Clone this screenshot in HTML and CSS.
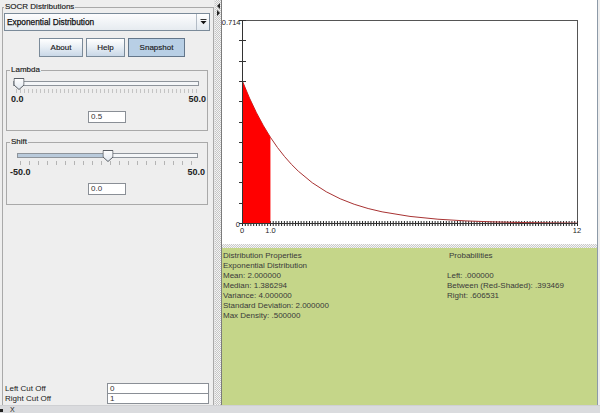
FILE: index.html
```html
<!DOCTYPE html>
<html>
<head>
<meta charset="utf-8">
<title>SOCR Distributions</title>
<link rel="stylesheet" href="styles.css">
</head>
<body>
<div class="app">
  <div class="main">
    <div class="left">
      <div class="group outer">
        <span class="title">SOCR Distributions</span>
        <div class="combo">
          <span class="combo-text">Exponential Distribution</span>
          <span class="combo-btn"><svg width="7" height="6" viewBox="0 0 7 6"><path d="M0.5 0.5H6.5" stroke="#333" stroke-width="1"/><path d="M0.5 2H6.5L3.5 5.2Z" fill="#111"/></svg></span>
        </div>
        <div class="buttons">
          <button class="btn about">About</button>
          <button class="btn help">Help</button>
          <button class="btn snap pressed">Snapshot</button>
        </div>
        <div class="group param lambda">
          <span class="title">Lambda</span>
          <div class="slider">
            <div class="track" style="--pos:0.01">
              <div class="fill"></div>
              <svg class="thumb" width="11" height="12" viewBox="0 0 11 12"><defs><linearGradient id="tg1" x1="0" y1="0" x2="0" y2="1"><stop offset="0" stop-color="#ffffff"/><stop offset="1" stop-color="#dfe6ee"/></linearGradient></defs><path d="M0.5 0.5H10.5V7L5.5 11.5L0.5 7Z" fill="url(#tg1)" stroke="#5a5f66"/></svg>
            </div>
          </div>
          <div class="ticks fine"></div>
          <div class="range"><span>0.0</span><span>50.0</span></div>
          <div class="field-row"><div class="field small">0.5</div></div>
        </div>
        <div class="group param shift">
          <span class="title">Shift</span>
          <div class="slider">
            <div class="track" style="--pos:0.5">
              <div class="fill"></div>
              <svg class="thumb" width="11" height="12" viewBox="0 0 11 12"><defs><linearGradient id="tg2" x1="0" y1="0" x2="0" y2="1"><stop offset="0" stop-color="#ffffff"/><stop offset="1" stop-color="#dfe6ee"/></linearGradient></defs><path d="M0.5 0.5H10.5V7L5.5 11.5L0.5 7Z" fill="url(#tg2)" stroke="#5a5f66"/></svg>
            </div>
          </div>
          <div class="ticks coarse"></div>
          <div class="range"><span>-50.0</span><span>50.0</span></div>
          <div class="field-row"><div class="field small">0.0</div></div>
        </div>
        <div class="spacer"></div>
        <div class="cut-row">
          <span class="cut-label">Left Cut Off</span>
          <div class="field wide">0</div>
        </div>
        <div class="cut-row second">
          <span class="cut-label">Right Cut Off</span>
          <div class="field wide">1</div>
        </div>
      </div>
    </div>
    <div class="divider">
      <svg width="7" height="16" viewBox="0 0 7 16"><path d="M5 2L2 5L5 8Z" fill="#222"/><path d="M2 9L5 12L2 15Z" fill="#222"/></svg>
    </div>
    <div class="right">
      <div class="chart">
        <svg class="plot" width="375" height="244" viewBox="0 1 375 244">
          <path d="M20.5 21.5H355.5V224.5" fill="none" stroke="#555" stroke-width="1" shape-rendering="crispEdges"/>
          <path d="M17 21.5H24M17 41.8H24M17 62.1H24M17 82.4H24M17 102.7H24M17 123H24M17 143.3H24M17 163.6H24M17 183.9H24M17 204.2H24M17 224.5H24" stroke="#333" stroke-width="1" shape-rendering="crispEdges"/>
          <line x1="20" y1="224.5" x2="356" y2="224.5" stroke="#222" stroke-width="5" stroke-dasharray="1 1.7917"/>
          <polyline fill="none" stroke="#a83232" stroke-width="1" points="20.5,82.35 27.48,99.06 34.46,113.79 41.44,126.8 48.42,138.28 55.4,148.41 62.38,157.35 69.35,165.24 76.33,172.21 90.29,183.77 104.25,192.78 118.21,199.79 132.17,205.26 146.13,209.52 160.09,212.83 188,217.42 215.92,220.21 243.84,221.9 271.75,222.92 299.67,223.54 327.59,223.92 355.5,224.15"/>
          <polygon fill="#ff0000" points="20.5,224.5 20.5,82.35 27.48,99.06 34.46,113.79 41.44,126.8 48.42,138.28 48.42,224.5"/>
          <path d="M20.5 21.5V224.5H355.5" fill="none" stroke="#333" stroke-width="1" shape-rendering="crispEdges"/>
          <g class="axis-label">
            <text x="18.5" y="26" text-anchor="end">0.714</text>
            <text x="18" y="228" text-anchor="end">0</text>
            <text x="20" y="233.5" text-anchor="middle">0</text>
            <text x="48.5" y="233.5" text-anchor="middle">1.0</text>
            <text x="355" y="233.5" text-anchor="middle">12</text>
          </g>
        </svg>
      </div>
      <div class="sep"></div>
      <div class="props">
        <div class="col">
          <div>Distribution Properties</div>
          <div>Exponential Distribution</div>
          <div>Mean: 2.000000</div>
          <div>Median: 1.386294</div>
          <div>Variance: 4.000000</div>
          <div>Standard Deviation: 2.000000</div>
          <div>Max Density: .500000</div>
        </div>
        <div class="col">
          <div class="prob-title">Probabilities</div>
          <div class="blank"></div>
          <div>Left: .000000</div>
          <div>Between (Red-Shaded): .393469</div>
          <div>Right: .606531</div>
        </div>
      </div>
    </div>
    <div class="edge"></div>
  </div>
  <div class="status"><span class="sq"></span><span class="status-x">X</span></div>
</div>
</body>
</html>
```
FILE: styles.css
```css
* { box-sizing: border-box; }
html, body { margin: 0; padding: 0; }
body {
  width: 600px;
  height: 413px;
  overflow: hidden;
  background: #eeeeee;
  font-family: "Liberation Sans", Arial, sans-serif;
  font-size: 8px;
  color: #1c1c1c;
}
.app { display: flex; flex-direction: column; width: 600px; height: 413px; }
.main { display: flex; height: 405px; }

/* left control column */
.left { width: 214px; background: #eeeeee; display: flex; flex-direction: column; }
.group { border: 1px solid #a9a9a9; display: flex; flex-direction: column; }
.title {
  align-self: flex-start;
  margin: -6px 0 0 0;
  padding: 0 1px;
  height: 10px;
  line-height: 10px;
  font-size: 8px;
  background: #eeeeee;
  color: #1a1a1a;
  -webkit-text-stroke: 0.15px #1a1a1a;
}
.outer {
  flex: 1;
  margin: 7px 0 0 2px;
  padding: 0 3px 1px 1px;
  border-bottom: 0;
}
.combo {
  margin-top: 1px;
  height: 18px;
  border: 1px solid #7a8a99;
  display: flex;
  background: linear-gradient(#fdfdfe, #e6ebf0);
}
.combo-text { flex: 1; padding-left: 2px; line-height: 16px; font-size: 8.3px; color: #111; -webkit-text-stroke: 0.25px #111; }
.combo-btn {
  width: 13px;
  border-left: 1px solid #b3bcc6;
  display: flex;
  align-items: center;
  justify-content: center;
  background: linear-gradient(#ffffff, #e1e8ef);
}
.buttons { display: flex; gap: 3px; margin-top: 7px; padding-left: 35px; }
.btn {
  height: 19px;
  padding: 0;
  border: 1px solid #7a8a99;
  border-radius: 0;
  background: linear-gradient(#ffffff 0%, #e9eff5 45%, #c9d8e7 100%);
  font: 8px "Liberation Sans", Arial, sans-serif;
  color: #1a1a1a;
  -webkit-text-stroke: 0.15px #1a1a1a;
}
.about { width: 44px; }
.help { width: 39px; }
.snap { width: 57px; }
.btn.pressed { background: #b8cfe5; border-color: #63768a; }

.param { margin: 13px 2px 0; }
.param > .title { margin-left: 3px; }
.lambda { padding-bottom: 7px; }
.shift { margin-top: 11px; padding-bottom: 9px; }
.slider { margin-top: 2px; height: 12px; display: flex; align-items: center; }
.track {
  position: relative;
  flex: 1;
  height: 5px;
  border: 1px solid #8e949b;
  background: #f4f6f8;
}
.lambda .track { margin: 0 8px 0 6px; }
.shift .track { margin: 0 9px 0 10px; }
.fill {
  height: 100%;
  width: calc(3px + var(--pos) * (100% - 6px));
  background: #b9cadb;
}
.thumb {
  position: absolute;
  top: -4px;
  left: calc(3px + var(--pos) * (100% - 6px));
  transform: translateX(-50%);
  display: block;
}
.ticks { height: 5px; }
.ticks.fine {
  margin: 0 8px 0 9px;
  background: repeating-linear-gradient(to right, #c4c4c4 0 1px, transparent 1px 4px) 0 0 / 100% 4px no-repeat;
}
.ticks.coarse {
  margin: 0 11px 0 13px;
  background: repeating-linear-gradient(to right, #b4b4b4 0 1px, transparent 1px 9px) 0 0 / 100% 4px no-repeat;
}
.range {
  display: flex;
  justify-content: space-between;
  line-height: 10px;
  font-size: 9px;
  font-weight: bold;
  color: #222;
}
.lambda .range { margin: 0 1px 0 4px; }
.shift .range { margin: 0 2px 0 3px; padding-top: 1px; }
.field-row { display: flex; justify-content: center; margin-top: 7px; }
.shift .field-row { margin-top: 6px; }
.field {
  height: 12px;
  border: 1px solid #8a8f96;
  background: #ffffff;
  padding-left: 2px;
  line-height: 10px;
  font-size: 8px;
  color: #333;
}
.small { width: 38px; }
.spacer { flex: 1; }
.cut-row { display: flex; align-items: center; height: 11px; }
.cut-row.second { margin-top: -1px; }
.cut-label { flex: 1; padding-left: 1px; line-height: 9px; color: #1a1a1a; }
.wide { width: 102px; height: 11px; line-height: 9px; margin-right: 1px; }

/* split divider */
.divider {
  width: 7px;
  background-color: #f2f2f2;
  background-image: repeating-conic-gradient(#c6c6c6 0 25%, #f4f4f4 0 50%);
  background-size: 2px 2px;
  border-left: 1px solid #e4e4e4;
}
.divider svg { display: block; margin-top: 1px; }

/* right: chart + properties */
.right {
  width: 377px;
  display: flex;
  flex-direction: column;
  border-left: 1px solid #7b7b7b;
  border-right: 1px solid #8d9aa8;
}
.chart { height: 244px; background: #ffffff; }
.plot { display: block; }
.axis-label text { font-family: "Liberation Sans", Arial, sans-serif; font-size: 7.5px; fill: #222; }
.sep {
  height: 4px;
  background-color: #f4f4f4;
  background-image: repeating-conic-gradient(#c9c9c9 0 25%, #f6f6f6 0 50%);
  background-size: 2px 2px;
}
.props {
  flex: 1;
  background: #c5d689;
  display: grid;
  grid-template-columns: 224px 1fr;
  align-content: start;
  padding: 3px 0 0 1px;
  line-height: 10px;
  font-size: 8px;
  color: #3a3a3a;
}
.prob-title { padding-left: 2px; }
.blank { height: 10px; }
.edge { flex: 1; background: #eeeeee; }

/* bottom strip */
.status {
  height: 8px;
  background: #dadbde;
  display: flex;
  align-items: flex-start;
  overflow: hidden;
  border-top: 1px solid #cfd0d3;
}
.sq { width: 3px; height: 3px; margin: 3px 0 0 0; background: #222; }
.status-x { margin-left: 7px; line-height: 7px; font-size: 7px; color: #222; }
```
